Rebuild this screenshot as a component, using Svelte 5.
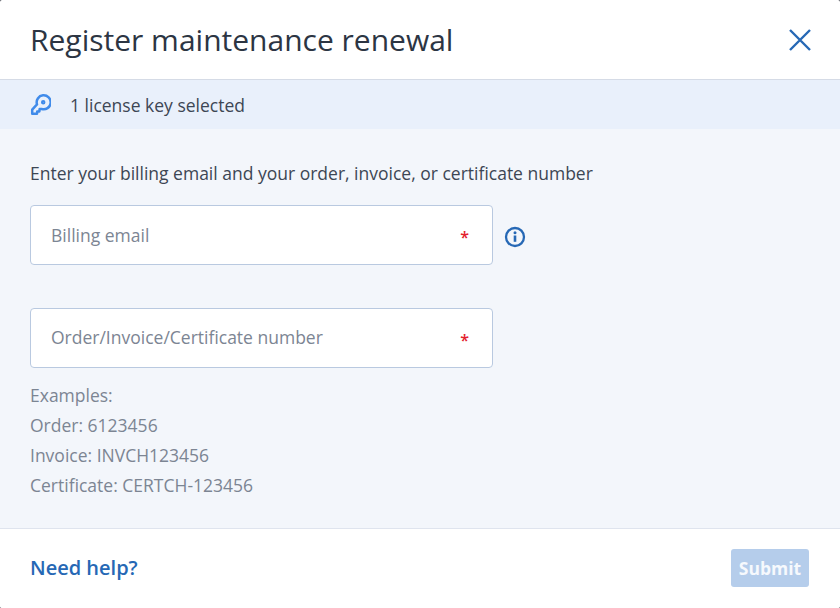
<script>
  let email = ''
  let orderNumber = ''
</script>

<div class="dialog">
  <header class="head">
    <h1>Register maintenance renewal</h1>
    <button class="close" aria-label="Close">
      <svg width="22" height="22" viewBox="0 0 22 22" fill="none" stroke="#2668b5" stroke-width="2.4">
        <path d="M1 1 L21 21 M21 1 L1 21" />
      </svg>
    </button>
  </header>

  <div class="selected">
    <svg class="key" width="21" height="22" viewBox="0 0 21 22" fill="none" stroke="#408bea" stroke-width="2.5" stroke-linejoin="round" stroke-linecap="round">
      <path d="M7 10.4 A7 7 0 1 1 11.6 15 L9.6 15 L9.4 17.4 L7.2 17.6 L7 19.8 L2.2 19.8 L2.2 15.6 Z" />
      <circle cx="13.2" cy="8.2" r="1" />
    </svg>
    <span>1 license key selected</span>
  </div>

  <main class="body">
    <p class="intro">Enter your billing email and your order, invoice, or certificate number</p>

    <div class="row first">
      <label class="field">
        <input type="text" placeholder="Billing email" bind:value={email} />
        <span class="req">*</span>
      </label>
      <svg class="info" width="22" height="22" viewBox="0 0 22 22" fill="none">
        <circle cx="11" cy="11" r="9" stroke="#2668b5" stroke-width="2.3" />
        <circle cx="11" cy="6.8" r="1.5" fill="#2668b5" />
        <path d="M11 9.5 V15.8" stroke="#2668b5" stroke-width="2.6" />
      </svg>
    </div>

    <div class="row second">
      <label class="field">
        <input type="text" placeholder="Order/Invoice/Certificate number" bind:value={orderNumber} />
        <span class="req">*</span>
      </label>
    </div>

    <div class="examples">
      <div>Examples:</div>
      <div>Order: 6123456</div>
      <div>Invoice: INVCH123456</div>
      <div>Certificate: CERTCH-123456</div>
    </div>
  </main>

  <footer class="foot">
    <a class="help" href="#help">Need help?</a>
    <button class="submit" disabled>Submit</button>
  </footer>
</div>

<style>
  :global(body) {
    margin: 0;
    background: #3a3f47;
  }

  .dialog {
    width: 840px;
    height: 608px;
    display: flex;
    flex-direction: column;
    background: #fff;
    border-radius: 2px;
    overflow: hidden;
    font-family: "Open Sans", "Liberation Sans", sans-serif;
    color: #3d4654;
  }

  .head {
    height: 79px;
    flex: none;
    display: flex;
    align-items: center;
    justify-content: space-between;
    padding: 0 29px 0 30px;
    border-bottom: 1px solid #d5dbe6;
  }

  h1 {
    margin: 0;
    font-size: 30px;
    font-weight: 400;
    color: #2c3543;
  }

  .close {
    display: block;
    padding: 0;
    border: 0;
    background: none;
    height: 22px;
  }

  .selected {
    height: 49px;
    flex: none;
    display: flex;
    align-items: center;
    padding-left: 30px;
    gap: 19px;
    background: #e9f0fb;
    font-size: 17.5px;
  }

  .key {
    flex: none;
  }

  .body {
    flex: 1;
    padding: 0 30px;
    background: #f3f6fb;
    border-bottom: 1px solid #dfe4ee;
  }

  .intro {
    margin: 32px 0 19px;
    font-size: 17.5px;
    line-height: 25px;
  }

  .row {
    display: flex;
    align-items: center;
  }

  .second {
    margin-top: 43px;
  }

  .field {
    position: relative;
    display: block;
    width: 463px;
    height: 60px;
  }

  input {
    box-sizing: border-box;
    width: 100%;
    height: 100%;
    padding: 0 60px 0 20px;
    border: 1px solid #b9c9e0;
    border-radius: 4px;
    background: #fff;
    font: inherit;
    font-size: 17.5px;
    color: #3d4654;
    outline: none;
  }

  .second input {
    padding-bottom: 2px;
  }

  input::placeholder {
    color: #7c8593;
    opacity: 1;
  }

  .req {
    position: absolute;
    right: 24px;
    top: 20px;
    color: #e3202c;
    font-size: 16px;
    font-weight: 600;
    line-height: 25px;
  }

  .info {
    margin-left: 11px;
    margin-top: 3px;
  }

  .examples {
    margin-top: 12px;
    font-size: 17.5px;
    line-height: 30px;
    color: #7c8593;
  }

  .foot {
    height: 79px;
    flex: none;
    box-sizing: border-box;
    display: flex;
    align-items: center;
    justify-content: space-between;
    padding: 0 31px 2px 30px;
    background: #fff;
  }

  .help {
    font-size: 20px;
    font-weight: 600;
    color: #2668b5;
    text-decoration: none;
  }

  .submit {
    width: 78px;
    height: 38px;
    padding: 0;
    border: 0;
    border-radius: 3px;
    background: #b5cdeb;
    color: #f6f9fd;
    font: inherit;
    font-size: 17.5px;
    font-weight: 700;
  }
</style>
